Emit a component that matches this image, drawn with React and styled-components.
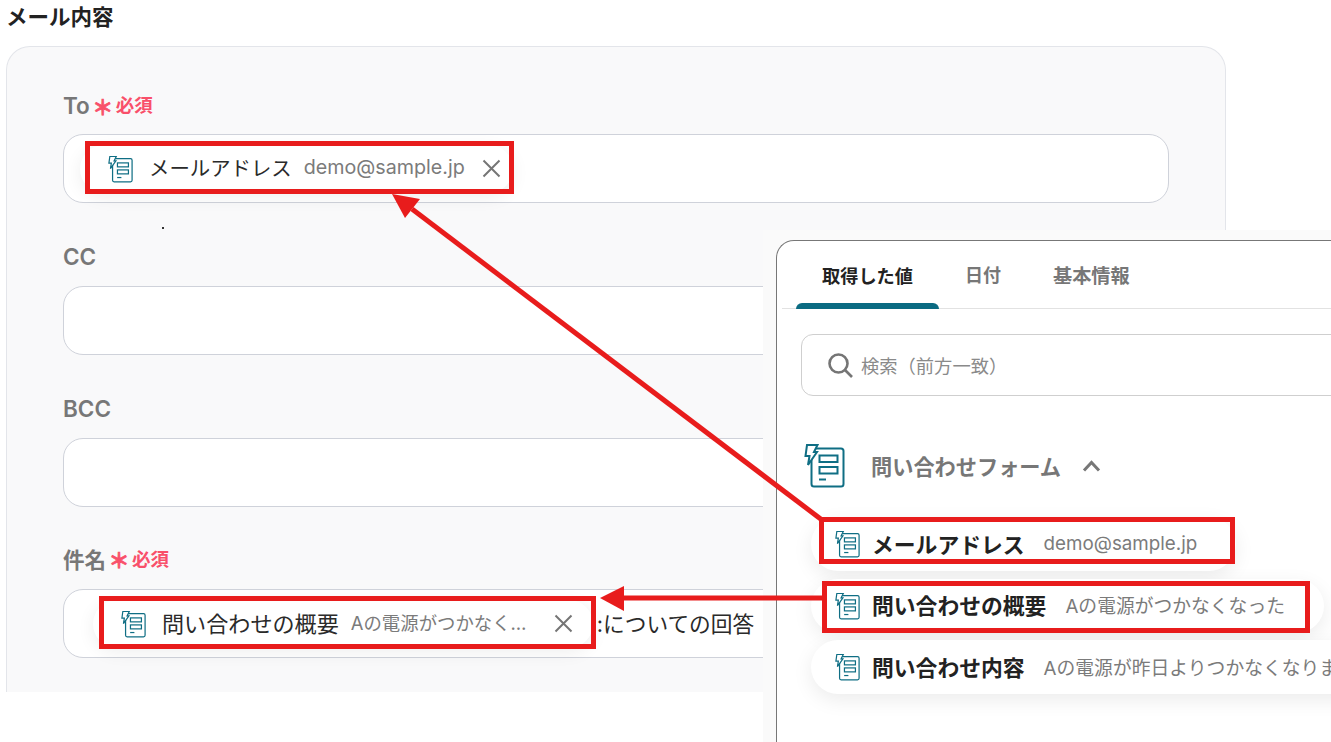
import React from 'react';
import styled, { createGlobalStyle } from 'styled-components';

const Global = createGlobalStyle`
  html, body { margin: 0; padding: 0; background: #fff; }
  * { box-sizing: border-box; }
`;

const Page = styled.div`
  position: relative;
  width: 1331px;
  height: 742px;
  overflow: hidden;
  background: #fff;
  font-family: Inter, "Noto Sans CJK JP", sans-serif;
  color: #222;
`;

const Heading = styled.h2`
  margin: 0 0 12px 6px;
  height: 34px;
  line-height: 34px;
  font-size: 21.5px;
  font-weight: 700;
  color: #222;
`;

const FormPanel = styled.section`
  margin-left: 6px;
  width: 1220px;
  height: 646px;
  padding: 43px 56px 0;
  background: #f9f9fa;
  border: 1px solid #e3e5ea;
  border-bottom: none;
  border-radius: 24px 24px 0 0;
  display: flex;
  flex-direction: column;
  gap: 38.8px;
`;

const Field = styled.div`
  display: flex;
  flex-direction: column;
  gap: 14px;
`;

const Label = styled.div`
  height: 30px;
  display: flex;
  align-items: center;
  gap: 6px;
  padding-bottom: ${p => p.$lift || 0}px;
  font-size: ${p => p.$size}px;
  font-weight: 600;
  color: #777;
`;

const Asterisk = styled.span`
  font-size: 21px;
  font-weight: 700;
  color: #f9506a;
  -webkit-text-stroke: 0.7px #f9506a;
  line-height: 1;
  width: 14px;
  margin-top: 5px;
  display: flex;
  justify-content: center;
`;

const Required = styled.span`
  font-size: 18.5px;
  font-weight: 700;
  color: #f9506a;
  margin-bottom: ${p => p.$up}px;
`;

const Input = styled.div`
  height: 69px;
  width: 1106px;
  display: flex;
  align-items: center;
  padding-left: ${p => p.$inset}px;
  background: #fff;
  border: 1px solid #cfd2da;
  border-radius: 20px;
`;

const Chip = styled.div`
  height: 48px;
  display: flex;
  align-items: center;
  flex-shrink: 0;
  padding: 0 ${p => p.$end}px 0 28px;
  background: #fff;
  border-radius: 24px;
  box-shadow: 0 4px 18px rgba(0, 0, 0, 0.07);
`;

const ChipName = styled.span`
  margin: 0 0 3px 16px;
  font-size: ${p => p.$size}px;
  white-space: nowrap;
  color: #2a2a2a;
`;

const ChipValue = styled.span`
  margin: 0 0 3px 12px;
  max-width: ${p => p.$max};
  font-size: ${p => p.$size}px;
  white-space: nowrap;
  overflow: hidden;
  text-overflow: ellipsis;
  color: #7b7b7b;
`;

const Remove = styled.svg`
  margin-left: ${p => p.$gap}px;
  flex-shrink: 0;
`;

const AfterText = styled.span`
  margin: 0 0 3px 4px;
  font-size: 21.7px;
  white-space: nowrap;
  color: #2a2a2a;
`;

const Speck = styled.i`
  position: absolute;
  left: 162px;
  top: 227px;
  width: 2px;
  height: 2px;
  background: #333;
`;

const Overlay = styled.aside`
  position: absolute;
  left: 763px;
  top: 230px;
  right: 0;
  bottom: 0;
  padding: 10px 0 0 13px;
  background: #fafafa;
`;

const PickerPanel = styled.div`
  height: 520px;
  border: 1px solid #777;
  border-right: none;
  border-radius: 18px 0 0 0;
  background: #fff;
`;

const Tabs = styled.div`
  margin-left: 5px;
  padding-left: 14px;
  height: 68px;
  display: flex;
  border-bottom: 1px solid #e2e2e2;
`;

const Tab = styled.div`
  position: relative;
  height: 67px;
  padding: 21px 26px 0;
  font-size: ${p => p.$size}px;
  line-height: 28px;
  font-weight: 700;
  color: ${p => p.$active ? '#222' : '#777'};
  &::after {
    content: '';
    display: ${p => p.$active ? 'block' : 'none'};
    position: absolute;
    left: 0;
    right: 0;
    bottom: -1px;
    height: 6px;
    background: #0b6b82;
    border-radius: 6px 6px 0 0;
  }
`;

const SearchBox = styled.div`
  margin: 25px 0 0 24px;
  width: 700px;
  height: 62px;
  display: flex;
  align-items: center;
  gap: 8px;
  padding-left: 26px;
  border: 1px solid #cfcfcf;
  border-radius: 12px;
  font-size: 18.3px;
  color: #8a8a8a;
`;

const Group = styled.div`
  margin: 47px 0 0 27px;
  height: 45px;
  display: flex;
  align-items: center;
`;

const GroupName = styled.span`
  margin-left: 26px;
  font-size: 21.2px;
  font-weight: 700;
  color: #777;
`;

const Chevron = styled.svg`
  margin-left: 21px;
`;

const Rows = styled.div`
  margin: 29px 0 0 34px;
  display: flex;
  flex-direction: column;
  align-items: flex-start;
  gap: 7.5px;
`;

const Row = styled.div`
  height: 54px;
  display: flex;
  align-items: center;
  flex-shrink: 0;
  padding: 0 39px 0 24px;
  background: #fff;
  border-radius: 27px;
  white-space: nowrap;
  box-shadow: 0 6px 20px rgba(0, 0, 0, 0.08);
`;

const RowName = styled.span`
  margin: 0 0 2px 12px;
  font-size: 21.8px;
  font-weight: 700;
  color: #222;
`;

const RowValue = styled.span`
  margin: 0 0 2px 19px;
  font-size: 18.8px;
  color: #7b7b7b;
`;

const RedBox = styled.div`
  position: absolute;
  left: ${p => p.$x}px;
  top: ${p => p.$y}px;
  width: ${p => p.$w}px;
  height: ${p => p.$h}px;
  border: 5px solid #e81c1c;
`;

const Arrows = styled.svg`
  position: absolute;
  left: 0;
  top: 0;
  pointer-events: none;
`;

const FormIcon = ({ large }) => (
  <svg width={large ? 41 : 25} height={large ? 45 : 28} viewBox="8 8 41 45" fill="none" style={{ flexShrink: 0 }}>
    <rect x="15.5" y="13.5" width="32" height="38" rx="2.5" stroke="#0f6e84" strokeWidth="2" fill="#fff" />
    <rect x="23.5" y="20.5" width="18" height="6.5" stroke="#0f6e84" strokeWidth="2" />
    <rect x="23.5" y="32" width="18" height="6.5" stroke="#0f6e84" strokeWidth="2" />
    <path d="M23 44.5h7" stroke="#0f6e84" strokeWidth="2" />
    <path d="M11 10h10.5l-3.5 7h3l-9 13 1.5-9h-4z" fill="#fff" stroke="#0f6e84" strokeWidth="2" strokeLinejoin="miter" />
  </svg>
);

const RemoveIcon = ({ gap }) => (
  <Remove $gap={gap} width="19" height="19" viewBox="0 0 19 19" fill="none">
    <path d="M1.5 1.5l16 16M17.5 1.5l-16 16" stroke="#757575" strokeWidth="2" />
  </Remove>
);

const Mark = ({ up }) => (
  <>
    <Asterisk>＊</Asterisk>
    <Required $up={up}>必須</Required>
  </>
);

export default function App() {
  return (
    <Page>
      <Global />
      <Heading>メール内容</Heading>
      <FormPanel>
        <Field>
          <Label $size={22.5}>To<Mark up={3} /></Label>
          <Input $inset={16}>
            <Chip $end={12}>
              <FormIcon />
              <ChipName $size={20.4}>メールアドレス</ChipName>
              <ChipValue $size={19.7} $max="none">demo@sample.jp</ChipValue>
              <RemoveIcon gap={17} />
            </Chip>
          </Input>
        </Field>
        <Field>
          <Label $size={22.5}>CC</Label>
          <Input $inset={16} />
        </Field>
        <Field>
          <Label $size={22.5}>BCC</Label>
          <Input $inset={16} />
        </Field>
        <Field>
          <Label $size={21.5} $lift={4}>件名<Mark up={0} /></Label>
          <Input $inset={29}>
            <Chip $end={20}>
              <FormIcon />
              <ChipName $size={22.1}>問い合わせの概要</ChipName>
              <ChipValue $size={18.4} $max="176px">Aの電源がつかなくなった</ChipValue>
              <RemoveIcon gap={27} />
            </Chip>
            <AfterText>:についての回答</AfterText>
          </Input>
        </Field>
      </FormPanel>
      <Speck />

      <Overlay>
        <PickerPanel>
          <Tabs>
            <Tab $active $size={18.2}>取得した値</Tab>
            <Tab $size={18}>日付</Tab>
            <Tab $size={19.2}>基本情報</Tab>
          </Tabs>
          <SearchBox>
            <svg width="25" height="25" viewBox="0 0 25 25" fill="none">
              <circle cx="10.5" cy="10.5" r="9" stroke="#757575" strokeWidth="2.6" />
              <path d="M17 17l7 7" stroke="#757575" strokeWidth="2.6" />
            </svg>
            検索（前方一致）
          </SearchBox>
          <Group>
            <FormIcon large />
            <GroupName>問い合わせフォーム</GroupName>
            <Chevron width="19" height="12" viewBox="0 0 19 12" fill="none">
              <path d="M2 10.5l7.5-8 7.5 8" stroke="#777" strokeWidth="3" />
            </Chevron>
          </Group>
          <Rows>
            <Row>
              <FormIcon />
              <RowName>メールアドレス</RowName>
              <RowValue>demo@sample.jp</RowValue>
            </Row>
            <Row>
              <FormIcon />
              <RowName>問い合わせの概要</RowName>
              <RowValue>Aの電源がつかなくなった</RowValue>
            </Row>
            <Row>
              <FormIcon />
              <RowName>問い合わせ内容</RowName>
              <RowValue>Aの電源が昨日よりつかなくなりました</RowValue>
            </Row>
          </Rows>
        </PickerPanel>
      </Overlay>

      <RedBox $x={85} $y={141} $w={429} $h={53} />
      <RedBox $x={99} $y={596} $w={497} $h={53} />
      <RedBox $x={819} $y={517} $w={416} $h={47} />
      <RedBox $x={822} $y={581} $w={488} $h={52} />
      <Arrows width="1331" height="742" viewBox="0 0 1331 742" fill="none">
        <path d="M412 209L822 520" stroke="#e81c1c" strokeWidth="5" />
        <path d="M392 194L420 199L405 218z" fill="#e81c1c" />
        <path d="M620 598H823" stroke="#e81c1c" strokeWidth="5" />
        <path d="M600 598L624 586V611z" fill="#e81c1c" />
      </Arrows>
    </Page>
  );
}
